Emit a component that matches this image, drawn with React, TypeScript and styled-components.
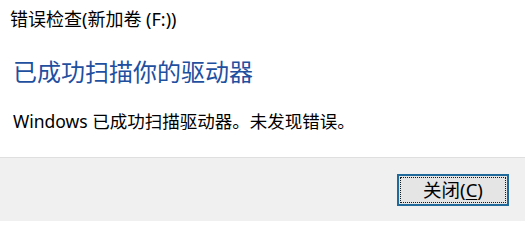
import styled, { createGlobalStyle } from "styled-components";

const GlobalStyle = createGlobalStyle`
  html, body {
    margin: 0;
    padding: 0;
    background: #ffffff;
  }
  body {
    font-family: "Noto Sans", "Noto Sans CJK SC", sans-serif;
    color: #000000;
  }
`;

const Dialog = styled.div`
  width: 525px;
  height: 221px;
  display: flex;
  flex-direction: column;
  background: #ffffff;
  overflow: hidden;
`;

const Content = styled.div`
  flex: 1;
  display: flex;
  flex-direction: column;
  padding: 0 13px;
`;

const Caption = styled.div`
  font-size: 18px;
  line-height: 22px;
  margin: 8px 0 0 -3px;
  color: #000000;
`;

const Instruction = styled.h1`
  margin: 27px 0 0;
  font-weight: 400;
  font-size: 24px;
  line-height: 30px;
  color: #1f4f9f;
`;

const Message = styled.p`
  margin: 23px 0 0;
  font-size: 17.5px;
  line-height: 22px;
`;

const Footer = styled.div`
  height: 64px;
  box-sizing: border-box;
  display: flex;
  justify-content: flex-end;
  align-items: center;
  padding: 0 16px;
  background: #f0f0f0;
  border-top: 1px solid #dfdfdf;
`;

const Button = styled.button`
  position: relative;
  width: 112px;
  height: 32px;
  box-sizing: border-box;
  border: 2px solid #1f6a9a;
  background: #e5e5e5;
  font-family: inherit;
  font-size: 18.5px;
  line-height: 22px;
  color: #000000;
  padding: 0;
  cursor: pointer;

  &::after {
    content: "";
    position: absolute;
    inset: 1px;
    border: 1px dotted #1a1a1a;
  }
`;

const Mnemonic = styled.span`
  text-decoration: underline;
  text-underline-offset: 2px;
`;

export default function App() {
  return (
    <>
      <GlobalStyle />
      <Dialog>
        <Content>
          <Caption>错误检查(新加卷 (F:))</Caption>
          <Instruction>已成功扫描你的驱动器</Instruction>
          <Message>Windows 已成功扫描驱动器。未发现错误。</Message>
        </Content>
        <Footer>
          <Button>
            关闭(<Mnemonic>C</Mnemonic>)
          </Button>
        </Footer>
      </Dialog>
    </>
  );
}
